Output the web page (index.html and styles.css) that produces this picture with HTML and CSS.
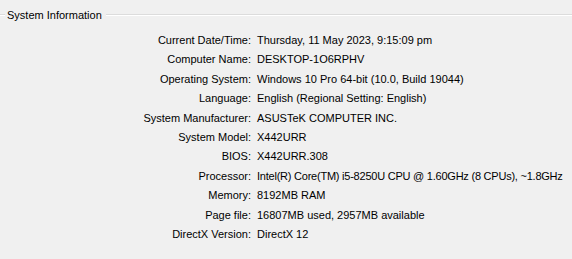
FILE: index.html
```html
<!DOCTYPE html>
<html>
<head>
<meta charset="utf-8">
<link rel="stylesheet" href="styles.css">
</head>
<body>
<section class="group">
  <div class="legend">
    <span class="rule rule-left"></span>
    <span class="legend-text">System Information</span>
    <span class="rule rule-right"></span>
  </div>
  <dl class="info">
    <dt>Current Date/Time:</dt><dd>Thursday, 11 May 2023, 9:15:09 pm</dd>
    <dt>Computer Name:</dt><dd>DESKTOP-1O6RPHV</dd>
    <dt>Operating System:</dt><dd>Windows 10 Pro 64-bit (10.0, Build 19044)</dd>
    <dt>Language:</dt><dd>English (Regional Setting: English)</dd>
    <dt>System Manufacturer:</dt><dd>ASUSTeK COMPUTER INC.</dd>
    <dt>System Model:</dt><dd>X442URR</dd>
    <dt>BIOS:</dt><dd>X442URR.308</dd>
    <dt>Processor:</dt><dd class="tight">Intel(R) Core(TM) i5-8250U CPU @ 1.60GHz (8 CPUs), ~1.8GHz</dd>
    <dt>Memory:</dt><dd>8192MB RAM</dd>
    <dt>Page file:</dt><dd>16807MB used, 2957MB available</dd>
    <dt>DirectX Version:</dt><dd>DirectX 12</dd>
  </dl>
</section>
</body>
</html>
```
FILE: styles.css
```css
html, body {
  margin: 0;
  padding: 0;
  background: #f0f0f0;
}
body {
  width: 572px;
  height: 259px;
  overflow: hidden;
  font-family: "Liberation Sans", Arial, sans-serif;
  font-size: 11px;
  color: #000;
}
.group {
  padding-top: 8px;
}
.legend {
  display: flex;
  align-items: center;
  height: 14px;
}
.rule {
  height: 1px;
  background: #dcdcdc;
  border-bottom: 1px solid #ffffff;
}
.rule-left {
  width: 5px;
}
.rule-right {
  flex: 1;
}
.legend-text {
  padding: 0 4px 0 2px;
}
.info {
  margin: 11px 0 0 0;
  display: grid;
  grid-template-columns: 251px 1fr;
  column-gap: 6px;
  row-gap: 4.9px;
  line-height: 14.5px;
}
.info dt {
  text-align: right;
}
.info dd {
  margin: 0;
  white-space: nowrap;
}
.info .tight {
  letter-spacing: -0.23px;
}
```
